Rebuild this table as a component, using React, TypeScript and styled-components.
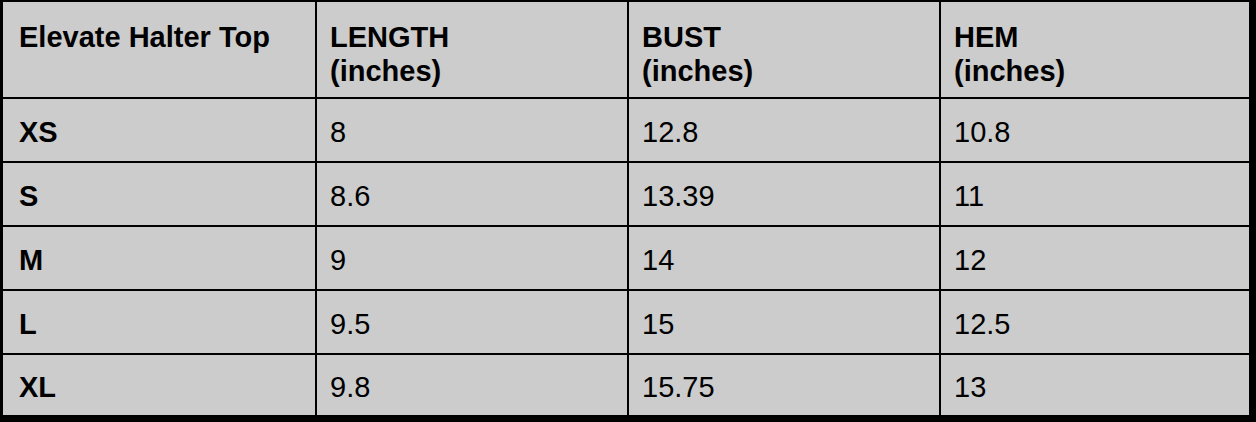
import React from "react";
import styled, { createGlobalStyle } from "styled-components";

const GlobalStyle = createGlobalStyle`
  html, body {
    margin: 0;
    padding: 0;
    background: #000;
  }
  body {
    font-family: "Liberation Sans", Arial, sans-serif;
  }
`;

const columns = ["LENGTH", "BUST", "HEM"];

const sizes = [
  { size: "XS", values: ["8", "12.8", "10.8"] },
  { size: "S", values: ["8.6", "13.39", "11"] },
  { size: "M", values: ["9", "14", "12"] },
  { size: "L", values: ["9.5", "15", "12.5"] },
  { size: "XL", values: ["9.8", "15.75", "13"] },
];

const TableGrid = styled.div`
  display: grid;
  grid-template-columns: 312px 310px 310px 308px;
  grid-template-rows: 95px 62px 62px 62px 62px 60px;
  gap: 2px;
  padding: 2px 7px 7px 3px;
  width: 1256px;
  height: 422px;
  box-sizing: border-box;
  background: #000;
`;

const Cell = styled.div<{ $bold?: boolean; $header?: boolean; $first?: boolean }>`
  background: #cccccc;
  color: #000;
  display: flex;
  flex-direction: column;
  justify-content: ${(p) => (p.$header ? "flex-start" : "center")};
  padding: ${(p) => (p.$header ? "18px" : "3px")} 12px 0
    ${(p) => (p.$first ? "16px" : "13px")};
  font-size: 29px;
  line-height: 34px;
  font-weight: ${(p) => (p.$bold ? 700 : 400)};
  box-sizing: border-box;
  white-space: nowrap;
`;

const App: React.FC = () => {
  return (
    <>
      <GlobalStyle />
      <TableGrid>
        <Cell $header $bold $first>
          Elevate Halter Top
        </Cell>
        {columns.map((c) => (
          <Cell key={c} $header $bold>
            <span>{c}</span>
            <span>(inches)</span>
          </Cell>
        ))}
        {sizes.map((row) => (
          <React.Fragment key={row.size}>
            <Cell $bold $first>
              {row.size}
            </Cell>
            {row.values.map((v, i) => (
              <Cell key={i}>{v}</Cell>
            ))}
          </React.Fragment>
        ))}
      </TableGrid>
    </>
  );
};

export default App;
